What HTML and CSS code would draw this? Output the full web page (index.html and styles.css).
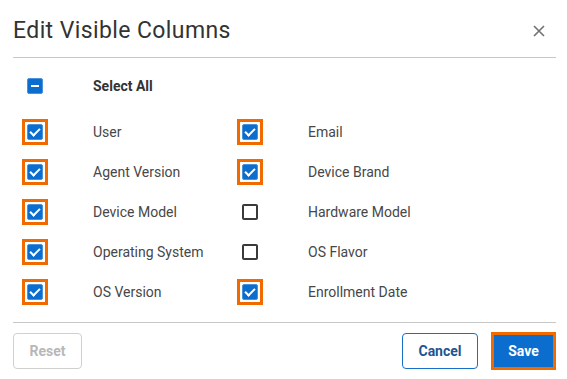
FILE: index.html
```html
<!DOCTYPE html>
<html lang="en">
<head>
  <meta charset="UTF-8">
  <meta name="viewport" content="width=device-width, initial-scale=1.0">
  <title>Edit Visible Columns</title>
  <link rel="stylesheet" href="styles.css">
</head>
<body>
  <div class="modal">
    <div class="modal-header">
      <h2>Edit Visible Columns</h2>
      <button class="close-btn" aria-label="Close">
        <svg width="12" height="12" viewBox="0 0 12 12"><path d="M1 1L11 11M11 1L1 11" stroke="#707070" stroke-width="1.6" fill="none"/></svg>
      </button>
    </div>

    <div class="modal-body">
      <div class="select-all">
        <span class="check indeterminate"></span>
        <span class="select-all-label">Select All</span>
      </div>

      <div class="column-grid">
        <span class="check checked focus"></span><span class="label">User</span>
        <span class="check checked focus"></span><span class="label">Email</span>

        <span class="check checked focus"></span><span class="label">Agent Version</span>
        <span class="check checked focus"></span><span class="label">Device Brand</span>

        <span class="check checked focus"></span><span class="label">Device Model</span>
        <span class="check"></span><span class="label">Hardware Model</span>

        <span class="check checked focus"></span><span class="label">Operating System</span>
        <span class="check"></span><span class="label">OS Flavor</span>

        <span class="check checked focus"></span><span class="label">OS Version</span>
        <span class="check checked focus"></span><span class="label">Enrollment Date</span>
      </div>
    </div>

    <div class="modal-footer">
      <button class="btn btn-reset" disabled>Reset</button>
      <div class="footer-right">
        <button class="btn btn-cancel">Cancel</button>
        <button class="btn btn-save">Save</button>
      </div>
    </div>
  </div>
</body>
</html>
```

FILE: styles.css
```css
body {
  font-family: Roboto, "Liberation Sans", Arial, sans-serif;
  margin: 0;
  padding: 0;
  background-color: #fff;
  color: #333;
}

.modal {
  width: 543px;
  padding: 0 11px 0 13px;
}

/* Header */
.modal-header {
  display: flex;
  justify-content: space-between;
  align-items: center;
  padding: 18px 0 13px;
  border-bottom: 1px solid #c8c8c8;
}

.modal-header h2 {
  margin: 0;
  font-size: 23px;
  font-weight: 400;
  letter-spacing: 0.4px;
  line-height: 26px;
  color: #333;
}

.close-btn {
  border: none;
  background: none;
  padding: 0;
  margin-right: 11px;
  width: 12px;
  height: 12px;
  display: flex;
  cursor: pointer;
}

/* Body */
.modal-body {
  padding: 8px 0 10px 14px;
}

.select-all {
  display: flex;
  align-items: center;
  height: 40px;
  margin-bottom: 6px;
}

.select-all .check {
  margin-right: 50px;
}

.select-all-label {
  font-size: 14px;
  font-weight: 700;
  color: #333;
}

.column-grid {
  display: grid;
  grid-template-columns: 66px 149px 66px auto;
  grid-auto-rows: 40px;
  align-items: center;
}

.label {
  font-size: 14px;
  color: #474747;
}

/* Checkboxes */
.check {
  box-sizing: border-box;
  width: 16px;
  height: 16px;
  border: 2px solid #3a3a3a;
  border-radius: 2px;
  background: #fff;
  display: inline-flex;
  align-items: center;
  justify-content: center;
}

.check.checked,
.check.indeterminate {
  background: #0b6dce;
  border: 1px solid #4a92dc;
}

.check.checked::after {
  content: "";
  width: 8px;
  height: 4px;
  border-left: 2px solid #fff;
  border-bottom: 2px solid #fff;
  transform: translateY(-1px) rotate(-45deg);
}

.check.indeterminate::after {
  content: "";
  width: 8px;
  height: 2px;
  background: #fff;
}

/* square focus ring drawn over the box */
.check.focus {
  position: relative;
}

.check.focus::before {
  content: "";
  position: absolute;
  top: -6px;
  left: -6px;
  right: -6px;
  bottom: -6px;
  border: 3px solid #f06a00;
}

/* Footer */
.modal-footer {
  display: flex;
  justify-content: space-between;
  align-items: center;
  border-top: 1px solid #c8c8c8;
  padding: 10px 3px 10px 0;
}

.footer-right {
  display: flex;
  align-items: center;
  gap: 16px;
}

.btn {
  font-family: Roboto, "Liberation Sans", Arial, sans-serif;
  font-size: 14px;
  font-weight: 700;
  height: 36px;
  border-radius: 4px;
  background: #fff;
  cursor: pointer;
}

.btn-reset {
  width: 69px;
  border: 1px solid #d0d0d0;
  color: #b8b8b8;
}

.btn-cancel {
  width: 76px;
  border: 1px solid #1570c8;
  color: #1d5590;
}

.btn-save {
  width: 59px;
  height: 32px;
  border: none;
  border-radius: 0;
  background: #0b6dce;
  color: #fff;
  outline: 3px solid #f06a00;
}
```
